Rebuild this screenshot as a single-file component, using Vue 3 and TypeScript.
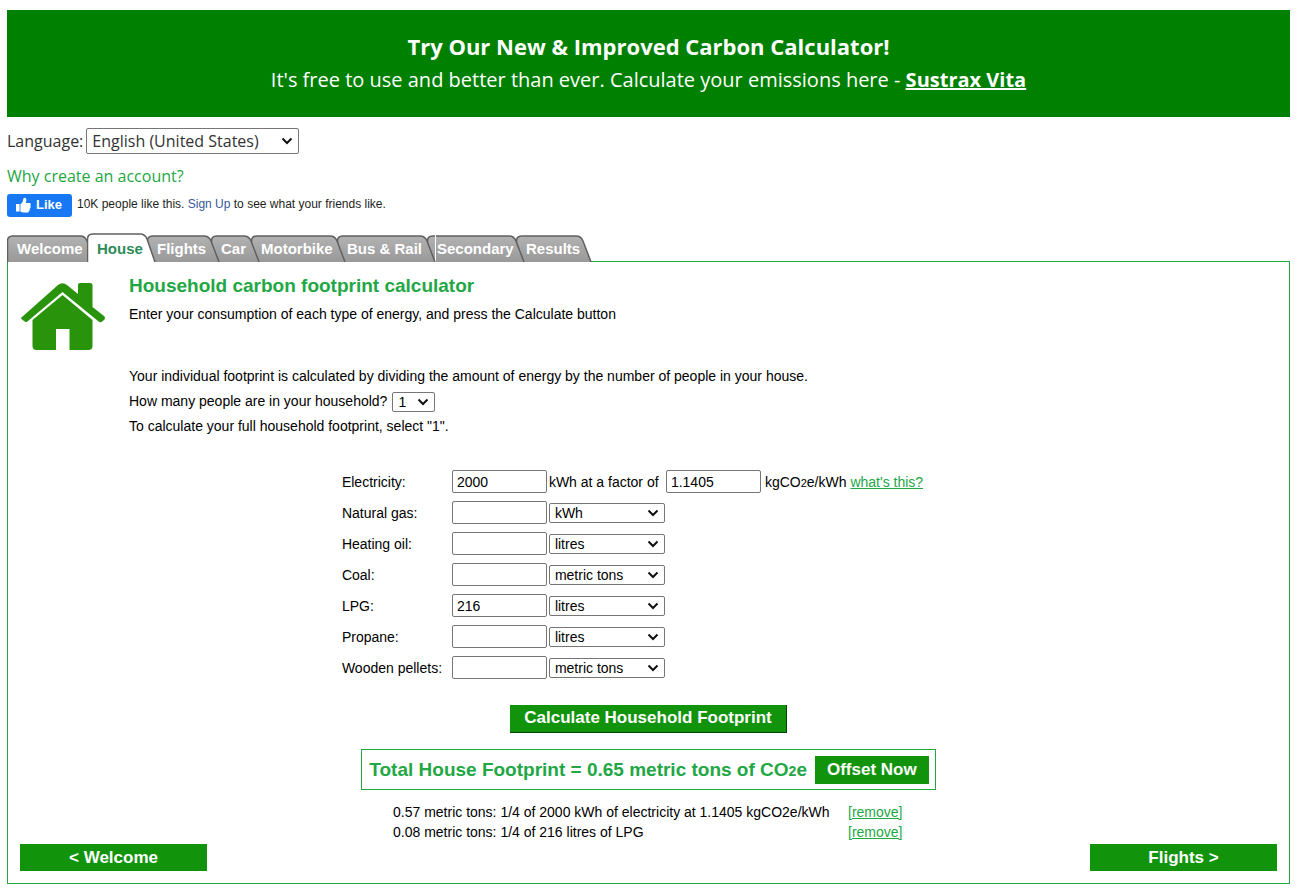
<script setup lang="ts">
import { ref } from 'vue'

interface Tab {
  label: string
  width: number
  active?: boolean
  seam?: boolean
}

interface Fuel {
  id: string
  label: string
  amount: string
  unit: string
}

const tabs: Tab[] = [
  { label: 'Welcome', width: 80 },
  { label: 'House', width: 60, active: true },
  { label: 'Flights', width: 64 },
  { label: 'Car', width: 40 },
  { label: 'Motorbike', width: 86 },
  { label: 'Bus & Rail', width: 90 },
  { label: 'Secondary', width: 89, seam: true },
  { label: 'Results', width: 67 },
]

const units = ['kWh', 'litres', 'metric tons']

const language = ref('English (United States)')
const people = ref('1')
const electricity = ref('2000')
const factor = ref('1.1405')

const fuels = ref<Fuel[]>([
  { id: 'gas', label: 'Natural gas:', amount: '', unit: 'kWh' },
  { id: 'oil', label: 'Heating oil:', amount: '', unit: 'litres' },
  { id: 'coal', label: 'Coal:', amount: '', unit: 'metric tons' },
  { id: 'lpg', label: 'LPG:', amount: '216', unit: 'litres' },
  { id: 'propane', label: 'Propane:', amount: '', unit: 'litres' },
  { id: 'pellets', label: 'Wooden pellets:', amount: '', unit: 'metric tons' },
])

const results = [
  '0.57 metric tons: 1/4 of 2000 kWh of electricity at 1.1405 kgCO2e/kWh',
  '0.08 metric tons: 1/4 of 216 litres of LPG',
]

function tabPath(tab: Tab): string {
  const w = tab.width
  const h = tab.active ? 29 : 27
  return `M0.5 ${h}V6Q0.5 1 6 1H${w - 7}Q${w - 2} 1 ${w} 6L${w + 8} ${h}`
}
</script>

<template>
  <div class="page">
    <header class="banner">
      <h1>Try Our New &amp; Improved Carbon Calculator!</h1>
      <p>It's free to use and better than ever. Calculate your emissions here - <a href="#">Sustrax Vita</a></p>
    </header>

    <div class="language">
      <label for="language">Language:</label>
      <select id="language" v-model="language">
        <option>English (United States)</option>
      </select>
    </div>

    <a class="why" href="#">Why create an account?</a>

    <div class="social">
      <button type="button" class="like">
        <svg width="16" height="16" viewBox="0 0 16 16" aria-hidden="true">
          <path fill="#fff" d="M1 7h3.600v7.500H1zM5.400 7.200C7 6.200 8 4.500 8.200 2.600 8.300 1.400 8.700.7 9.500.7c1.300 0 1.900 1 1.900 2.300 0 1.100-.4 2.100-.7 3h3.500c1 0 1.600.7 1.600 1.500 0 .6-.3 1-.7 1.300.4.3.6.7.6 1.200 0 .8-.5 1.300-1.100 1.500.2.300.3.600.3.900 0 .7-.5 1.200-1.200 1.400.1.200.1.400.1.600 0 .700-.6 1.200-1.500 1.200H8.700c-1.300 0-2.200-.4-3.300-1z" />
        </svg>
        Like
      </button>
      <span>10K people like this. <a href="#">Sign Up</a> to see what your friends like.</span>
    </div>

    <nav class="tabs">
      <a
        v-for="(tab, i) in tabs"
        :key="tab.label"
        href="#"
        class="tab"
        :class="{ active: tab.active }"
        :style="{ width: tab.width + 'px', zIndex: tab.active ? 20 : 10 - i }"
      >
        <svg class="shape" :width="tab.width + 9" :height="tab.active ? 29 : 27" aria-hidden="true">
          <defs>
            <linearGradient id="tabFill" x1="0" y1="0" x2="0" y2="1">
              <stop offset="0" stop-color="#b2b2b2" />
              <stop offset="1" stop-color="#999" />
            </linearGradient>
          </defs>
          <path :d="tabPath(tab)" :fill="tab.active ? '#fff' : 'url(#tabFill)'" stroke="#606060" stroke-width="1.5" />
          <path v-if="tab.seam" d="M8.500 0V27" stroke="#fff" />
        </svg>
        <span>{{ tab.label }}</span>
      </a>
    </nav>

    <main class="panel">
      <section class="intro">
        <svg class="house" width="86" height="70" viewBox="0 0 86 70" aria-hidden="true">
          <g fill="#2a930c">
            <path d="M2 35 38 3Q42.500-.500 47 3L58 12V3Q58 1 60 1H70Q72.500 1 72.500 3V25L84 34Q86 36 84 38L81.500 40Q80 41 78 39L42.500 10 8 39Q6 41 4 39L1.500 37Q.5 36 2 35Z" />
            <path d="M12.500 38 42.500 13 72.500 38V64Q72.500 68 68.500 68H49.500V47H36V68H16.500Q12.500 68 12.500 64Z" />
          </g>
        </svg>
        <div class="copy">
          <h2>Household carbon footprint calculator</h2>
          <p>Enter your consumption of each type of energy, and press the Calculate button</p>
          <div class="people">
            <p>Your individual footprint is calculated by dividing the amount of energy by the number of people in your house.</p>
            <p class="count">
              <label for="people">How many people are in your household?</label>
              <select id="people" v-model="people">
                <option>1</option>
                <option>2</option>
                <option>3</option>
                <option>4</option>
              </select>
            </p>
            <p>To calculate your full household footprint, select "1".</p>
          </div>
        </div>
      </section>

      <form @submit.prevent>
        <div class="fields">
          <div class="row">
            <label for="electricity">Electricity:</label>
            <input id="electricity" v-model="electricity" type="text">
            <label for="factor">kWh at a factor of</label>
            <input id="factor" v-model="factor" type="text">
            <span class="unit">kgCO<small>2</small>e/kWh <a href="#">what's this?</a></span>
          </div>
          <div v-for="fuel in fuels" :key="fuel.id" class="row">
            <label :for="fuel.id">{{ fuel.label }}</label>
            <input :id="fuel.id" v-model="fuel.amount" type="text">
            <select v-model="fuel.unit" :aria-label="fuel.label + ' unit'">
              <option v-for="u in units" :key="u">{{ u }}</option>
            </select>
          </div>
        </div>
        <button type="submit" class="calculate">Calculate Household Footprint</button>
      </form>

      <div class="total">
        <strong>Total House Footprint = 0.65 metric tons of CO<small>2</small>e</strong>
        <button type="button">Offset Now</button>
      </div>

      <table class="results">
        <tbody>
          <tr v-for="line in results" :key="line">
            <td>{{ line }}</td>
            <td><a href="#">[remove]</a></td>
          </tr>
        </tbody>
      </table>

      <div class="pager">
        <button type="button">&lt; Welcome</button>
        <button type="button">Flights &gt;</button>
      </div>
    </main>
  </div>
</template>

<style>
body {
  margin: 0;
  background: #fff;
}
</style>

<style scoped>
* {
  box-sizing: border-box;
}

.page {
  padding: 10px 10px 4px 7px;
  font: 14px/20px "Liberation Sans", Arial, sans-serif;
  color: #000;
}

h1,
h2,
p {
  margin: 0;
}

a {
  color: #22a745;
}

button {
  border: 0;
  background: #12930c;
  color: #fff;
  font: bold 17px/24px "Liberation Sans", Arial, sans-serif;
  cursor: pointer;
}

input,
select {
  border: 1px solid #767676;
  border-radius: 2px;
  background: #fff;
  color: #000;
  font: 14px "Liberation Sans", Arial, sans-serif;
}

select {
  appearance: none;
  padding: 0 20px 0 5px;
  background: #fff url("data:image/svg+xml,%3Csvg xmlns='http://www.w3.org/2000/svg' width='12' height='8'%3E%3Cpath d='M1.500 1.500 6 6 10.500 1.500' fill='none' stroke='%23111' stroke-width='2'/%3E%3C/svg%3E") no-repeat right 5px center;
}

.banner {
  padding: 20px 10px 21px;
  background: green;
  color: #fff;
  text-align: center;
  font: 20px/33px "Open Sans", sans-serif;
}

.banner h1 {
  font-size: 22px;
  line-height: 33px;
  font-weight: 700;
}

.banner a {
  color: #fff;
  font-weight: 700;
}

.language {
  display: flex;
  align-items: center;
  gap: 3px;
  margin-top: 11px;
  font: 16px/26px "Open Sans", sans-serif;
  color: #333;
}

.language select {
  width: 213px;
  height: 26px;
  font: 16px "Open Sans", sans-serif;
  color: #333;
}

.why {
  display: block;
  margin-top: 10px;
  font: 16px/24px "Open Sans", sans-serif;
  text-decoration: none;
}

.social {
  display: flex;
  gap: 5px;
  margin-top: 6px;
  font-size: 12px;
  color: #1c1e21;
}

.social a {
  color: #385898;
  text-decoration: none;
}

.like {
  display: flex;
  align-items: center;
  gap: 5px;
  width: 65px;
  height: 23px;
  padding: 0 8px 2px;
  border-radius: 3px;
  background: #1877f2;
  font-size: 13px;
}

.tabs {
  display: flex;
  align-items: flex-end;
  margin-top: 16px;
}

.tab {
  position: relative;
  height: 27px;
  padding-left: 10px;
  color: #fff;
  font-size: 15px;
  font-weight: 700;
  line-height: 28px;
  text-decoration: none;
  white-space: nowrap;
}

.tab.active {
  height: 29px;
  line-height: 32px;
  color: #2e8b57;
}

.shape {
  position: absolute;
  left: 0;
  top: 0;
}

.tab span {
  position: relative;
}

.panel {
  margin-top: -1px;
  padding: 10px 12px 12px;
  border: 1px solid #22a745;
}

.intro {
  display: flex;
  gap: 23px;
}

.house {
  flex: none;
  margin-top: 10px;
}

h2 {
  font-size: 19px;
  line-height: 28px;
  color: #22a745;
}

.copy p {
  line-height: 25px;
}

.copy h2 + p {
  margin-top: 2px;
}

.people {
  margin-top: 37px;
}

.count {
  display: flex;
  align-items: center;
  gap: 5px;
}

.count select {
  width: 43px;
  height: 20px;
}

form {
  display: flex;
  flex-direction: column;
  align-items: center;
  margin-top: 27px;
}

.fields {
  padding-right: 32px;
}

.row {
  display: grid;
  grid-template-columns: 108px 95px 115px 95px auto;
  column-gap: 2px;
  align-items: center;
  height: 31px;
}

.row input {
  width: 95px;
  height: 23px;
  padding: 1px 4px;
}

.row select {
  width: 116px;
  height: 20px;
}

.unit {
  padding-left: 2px;
}

.unit small {
  font-size: 11px;
  line-height: 11px;
}

.calculate {
  width: 277px;
  height: 28px;
  margin-top: 22px;
  padding: 0 0 2px;
  border: solid #064004;
  border-width: 0 1px 1px 0;
}

.total {
  display: flex;
  align-items: center;
  gap: 8px;
  width: fit-content;
  margin: 16px auto 12px;
  padding: 6px 6px 5px 7px;
  border: 1px solid #22a745;
  color: #22a745;
  font-size: 19px;
}

.total small {
  font-size: 14px;
}

.total button {
  height: 28px;
  padding: 0 12px;
}

.results {
  width: 511px;
  margin: 0 auto;
  border-spacing: 0;
}

.results td {
  padding: 0;
}

.results td + td {
  width: 56px;
}

.pager {
  display: flex;
  justify-content: space-between;
  margin-top: 2px;
}

.pager button {
  width: 187px;
  height: 27px;
}
</style>
